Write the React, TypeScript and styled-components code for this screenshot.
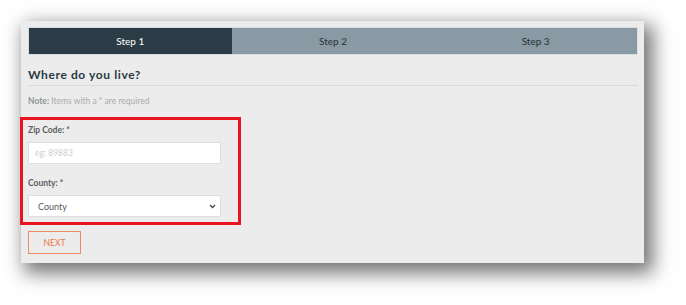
import React from "react";
import styled, { createGlobalStyle } from "styled-components";

const STEPS = ["Step 1", "Step 2", "Step 3"];

export default function App() {
  return (
    <>
      <GlobalStyle />
      <Page>
        <Panel>
          <StepBar>
            {STEPS.map((label, i) => (
              <StepTab key={label} $active={i === 0}>
                {label}
              </StepTab>
            ))}
          </StepBar>

          <Heading>Where do you live?</Heading>

          <Note>
            <strong>Note:</strong> Items with a * are required
          </Note>

          <Highlight>
            <Field>
              <Label>Zip Code: *</Label>
              <TextInput placeholder="eg: 89883" />
            </Field>
            <Field>
              <Label>County: *</Label>
              <SelectBox>
                <span>County</span>
                <svg width="7" height="5" viewBox="0 0 7 5">
                  <path d="M1 1 L3.5 3.5 L6 1" fill="none" stroke="#444" strokeWidth="1.3" />
                </svg>
              </SelectBox>
            </Field>
          </Highlight>

          <NextButton>NEXT</NextButton>
        </Panel>
      </Page>
    </>
  );
}

const GlobalStyle = createGlobalStyle`
  html, body {
    margin: 0;
    background: #ffffff;
    font-family: Lato, "Open Sans", sans-serif;
  }
`;

const Page = styled.div`
  padding: 21px 0 0 21px;
  height: 305px;
  box-sizing: border-box;
`;

const Panel = styled.div`
  width: 623px;
  height: 242px;
  box-sizing: border-box;
  padding: 6px 6px 0 7px;
  background: #ebeceb;
  box-shadow: 6px 7px 18px 3px rgba(0, 0, 0, 0.55);
  display: flex;
  flex-direction: column;
  align-items: flex-start;
`;

const StepBar = styled.div`
  align-self: stretch;
  display: grid;
  grid-template-columns: repeat(3, 1fr);
  height: 28px;
  box-sizing: border-box;
  border: 1px solid #d6dee2;
`;

const StepTab = styled.div<{ $active: boolean }>`
  display: flex;
  align-items: center;
  justify-content: center;
  font-size: 10px;
  color: ${({ $active }) => ($active ? "#ffffff" : "#2a3035")};
  background: ${({ $active }) => ($active ? "#2c3c47" : "#8a9aa4")};
`;

const Heading = styled.h2`
  align-self: stretch;
  margin: 13px 0 0;
  padding-bottom: 3px;
  border-bottom: 1px solid #d9dbdb;
  font-size: 12px;
  font-weight: 700;
  letter-spacing: 0.6px;
  line-height: 14px;
  color: #2a3a44;
`;

const Note = styled.p`
  margin: 9px 0 0;
  font-size: 8.5px;
  line-height: 12px;
  color: #a9adad;

  strong {
    color: #8f9494;
  }
`;

const Highlight = styled.div`
  margin: 10px 0 0 -8px;
  width: 221px;
  height: 108px;
  box-sizing: border-box;
  border: 3px solid #e8141f;
  padding: 4px 0 0 5px;
  display: flex;
  flex-direction: column;
  gap: 13px;
`;

const Field = styled.div`
  display: flex;
  flex-direction: column;
  gap: 6px;
`;

const Label = styled.label`
  font-size: 8.5px;
  font-weight: 700;
  line-height: 12px;
  color: #5a5e60;
`;

const TextInput = styled.input`
  width: 193px;
  height: 22px;
  box-sizing: border-box;
  border: 1px solid #dedfdf;
  background: #ffffff;
  padding: 0 6px;
  font-family: Lato, sans-serif;
  font-size: 8.5px;
  outline: none;

  &::placeholder {
    color: #cdd0d0;
  }
`;

const SelectBox = styled.div`
  width: 193px;
  height: 22px;
  box-sizing: border-box;
  border: 1px solid #dedfdf;
  background: #ffffff;
  padding: 0 4px 0 9px;
  display: flex;
  align-items: center;
  justify-content: space-between;
  font-size: 9px;
  color: #555a5c;
`;

const NextButton = styled.button`
  margin-top: 6px;
  width: 53px;
  height: 23px;
  box-sizing: border-box;
  border: 1.5px solid #f08a62;
  background: transparent;
  color: #ee7446;
  font-family: Lato, sans-serif;
  font-size: 8.5px;
  padding: 0;
  cursor: pointer;
`;
